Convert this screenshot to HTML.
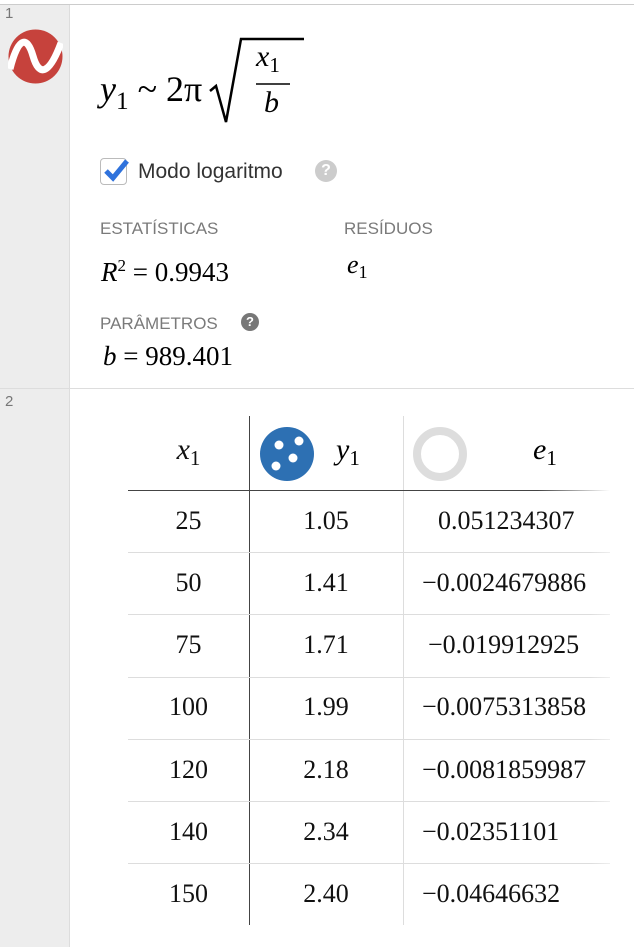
<!DOCTYPE html>
<html><head><meta charset="utf-8"><style>
*{margin:0;padding:0;box-sizing:border-box}
body{width:634px;height:947px;background:#fff;position:relative;overflow:hidden;font-family:"Liberation Sans",sans-serif}
.a{position:absolute}
.m{font-family:"Liberation Serif",serif;color:#000}
.i{font-style:italic}
.s{font-style:normal;position:relative;top:0.3em;font-size:0.7em}
.lab{font-size:17px;color:#7a7a7a}
.c{position:absolute;text-align:center;font-family:"Liberation Serif",serif;font-size:26px;color:#111}
.hl{position:absolute;left:128px;width:482px;height:1px;background:#ddd}
</style></head><body>
<div class="a" style="left:0;top:4px;width:634px;height:1px;background:#ccc"></div>
<div class="a" style="left:0;top:5px;width:70px;height:942px;background:#ededed;border-right:1px solid #ddd"></div>
<div class="a" style="left:5px;top:5px;font-size:15px;color:#777">1</div>
<div class="a" style="left:5px;top:393px;font-size:15px;color:#777">2</div>
<div class="a" style="left:0;top:388px;width:634px;height:1px;background:#ddd"></div>
<svg class="a" style="left:8px;top:29px" width="55" height="55" viewBox="0 0 55 55"><circle cx="27.5" cy="27.5" r="27" fill="#c6423c"/><path d="M2 40 C10 8,19 6,25 27 C31 48,41 46,53 14" stroke="#fff" stroke-width="7" fill="none"/></svg>
<div class="a m" style="left:100px;top:68px;font-size:36px"><span class="i">y</span><span class="s">1</span> ~ 2π</div>
<svg class="a" style="left:208px;top:36px" width="100" height="90"><path d="M2 55 L8 50 L18 86 L33 3 L96 3" stroke="#000" stroke-width="2.5" fill="none"/><line x1="48" y1="48" x2="82" y2="48" stroke="#000" stroke-width="1.5"/></svg>
<div class="a m i" style="left:256px;top:40px;font-size:30px">x<span class="s">1</span></div>
<div class="a m i" style="left:264px;top:86px;font-size:30px">b</div>
<div class="a" style="left:100px;top:158px;width:27px;height:27px;border:1px solid #bbb;border-radius:4px;background:#fff"></div>
<svg class="a" style="left:102px;top:156px" width="28" height="26"><path d="M4 15 L11 22 L25 5" stroke="#2f72dc" stroke-width="5" fill="none"/></svg>
<div class="a" style="left:138px;top:160px;font-size:21px;color:#333">Modo logaritmo</div>
<div class="a" style="left:315px;top:160px;width:22px;height:22px;border-radius:50%;background:#ccc;color:#fff;font-size:16px;font-weight:bold;text-align:center;line-height:22px">?</div>
<div class="a lab" style="left:100px;top:219px">ESTATÍSTICAS</div>
<div class="a lab" style="left:344px;top:219px">RESÍDUOS</div>
<div class="a m" style="left:101px;top:256px;font-size:27px"><span class="i">R</span><sup style="font-size:17px">2</sup> = 0.9943</div>
<div class="a m i" style="left:347px;top:250px;font-size:26px">e<span class="s">1</span></div>
<div class="a lab" style="left:100px;top:314px">PARÂMETROS</div>
<div class="a" style="left:241px;top:313px;width:18px;height:18px;border-radius:50%;background:#777;color:#fff;font-size:13px;font-weight:bold;text-align:center;line-height:18px">?</div>
<div class="a m" style="left:103px;top:341px;font-size:27px"><span class="i">b</span> = 989.401</div>

<div class="a" style="left:249px;top:416px;width:1px;height:509px;background:#444"></div>
<div class="a" style="left:403px;top:416px;width:1px;height:509px;background:#ddd"></div>
<div class="a" style="left:128px;top:490px;width:482px;height:1px;background:linear-gradient(90deg,#444 85%,#fff)"></div>
<div class="hl" style="top:552px"></div><div class="hl" style="top:614px"></div><div class="hl" style="top:677px"></div><div class="hl" style="top:739px"></div><div class="hl" style="top:801px"></div><div class="hl" style="top:863px"></div>
<div class="c i" style="left:128px;width:121px;top:433px;font-size:30px">x<span class="s">1</span></div>
<svg class="a" style="left:260px;top:427px" width="54" height="54"><circle cx="27" cy="27" r="27" fill="#2d70b3"/><circle cx="19" cy="18" r="4.5" fill="#fff"/><circle cx="39" cy="14" r="4.5" fill="#fff"/><circle cx="33" cy="31" r="4.5" fill="#fff"/><circle cx="16" cy="39" r="4.5" fill="#fff"/></svg>
<div class="a m i" style="left:336px;top:433px;font-size:30px">y<span class="s">1</span></div>
<svg class="a" style="left:413px;top:427px" width="54" height="54"><circle cx="27" cy="27" r="23" fill="none" stroke="#ddd" stroke-width="8"/></svg>
<div class="a m i" style="left:533px;top:433px;font-size:30px">e<span class="s">1</span></div>

<div class="c" style="left:128px;width:121px;top:506px">25</div><div class="c" style="left:249px;width:154px;top:506px">1.05</div><div class="c" style="left:403px;width:231px;top:506px;text-align:left;padding-left:35px">0.051234307</div>
<div class="c" style="left:128px;width:121px;top:568px">50</div><div class="c" style="left:249px;width:154px;top:568px">1.41</div><div class="c" style="left:403px;width:231px;top:568px;text-align:left;padding-left:19px">−0.0024679886</div>
<div class="c" style="left:128px;width:121px;top:630px">75</div><div class="c" style="left:249px;width:154px;top:630px">1.71</div><div class="c" style="left:403px;width:231px;top:630px;text-align:left;padding-left:25px">−0.019912925</div>
<div class="c" style="left:128px;width:121px;top:692px">100</div><div class="c" style="left:249px;width:154px;top:692px">1.99</div><div class="c" style="left:403px;width:231px;top:692px;text-align:left;padding-left:19px">−0.0075313858</div>
<div class="c" style="left:128px;width:121px;top:755px">120</div><div class="c" style="left:249px;width:154px;top:755px">2.18</div><div class="c" style="left:403px;width:231px;top:755px;text-align:left;padding-left:19px">−0.0081859987</div>
<div class="c" style="left:128px;width:121px;top:817px">140</div><div class="c" style="left:249px;width:154px;top:817px">2.34</div><div class="c" style="left:403px;width:231px;top:817px;text-align:left;padding-left:19px">−0.02351101</div>
<div class="c" style="left:128px;width:121px;top:879px">150</div><div class="c" style="left:249px;width:154px;top:879px">2.40</div><div class="c" style="left:403px;width:231px;top:879px;text-align:left;padding-left:19px">−0.04646632</div>
<div class="a" style="left:590px;top:491px;width:44px;height:434px;background:linear-gradient(90deg,rgba(255,255,255,0),#fff 90%)"></div>
</body></html>
